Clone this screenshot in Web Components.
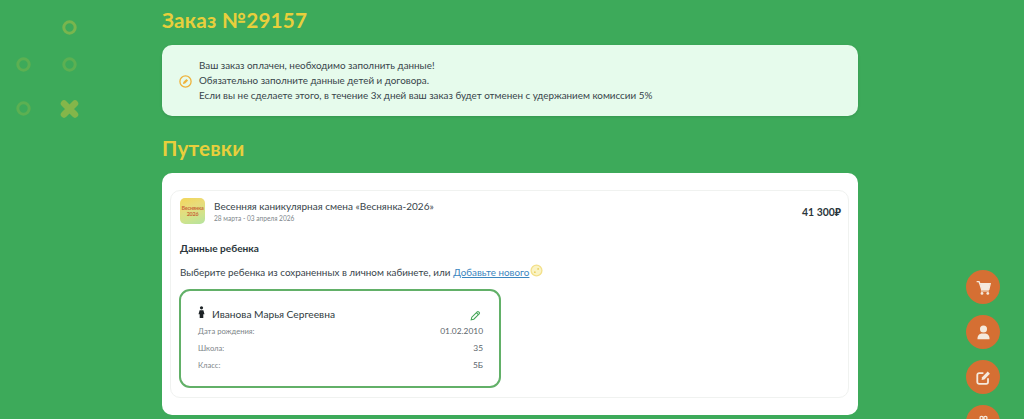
<!DOCTYPE html>
<html lang="ru">
<head>
<meta charset="utf-8">
<title>Заказ №29157</title>
<style>
    html, body { margin: 0; height: 419px; overflow: hidden; }
    body { background-color: #3daa5a; font-family: Lato, "Noto Sans", sans-serif; color: #2f3a40; }
</style>
</head>
<body>
<order-page>
    <deco-marks></deco-marks>
    <page-heading>Заказ №29157</page-heading>
    <notice-box>
        <span>Ваш заказ оплачен, необходимо заполнить данные!</span>
        <span>Обязательно заполните данные детей и договора.</span>
        <span>Если вы не сделаете этого, в течение 3х дней ваш заказ будет отменен с удержанием комиссии 5%</span>
    </notice-box>
    <page-heading class="second">Путевки</page-heading>
    <trip-card title-text="Весенняя каникулярная смена «Веснянка-2026»" dates="28 марта - 03 апреля 2026" price="41 300₽">
        <child-card name="Иванова Марья Сергеевна" birth="01.02.2010" school="35" grade="5Б"></child-card>
    </trip-card>
    <fab-stack>
        <fab-button icon="cart"></fab-button>
        <fab-button icon="user"></fab-button>
        <fab-button icon="edit"></fab-button>
        <fab-button icon="gift"></fab-button>
    </fab-stack>
</order-page>

<script>
// Contenedor de la pagina: columna central de 696px
class OrderPage extends HTMLElement {
    constructor() {
        super();
        this.attachShadow({ mode: 'open' });
        this.shadowRoot.innerHTML = `
            <style>
                :host { display: block; height: 419px; padding: 0 166px 0 162px; box-sizing: border-box; overflow: hidden; }
            </style>
            <slot></slot>
        `;
    }
}

// Marcas decorativas del fondo (circulos y una cruz)
class DecoMarks extends HTMLElement {
    constructor() {
        super();
        this.attachShadow({ mode: 'open' });
        this.shadowRoot.innerHTML = `
            <style>
                :host { position: absolute; left: 0; top: 0; display: block; }
                svg { display: block; }
            </style>
            <svg width="100" height="130" viewBox="0 0 100 130" fill="none">
                <circle cx="69.5" cy="27.5" r="5.7" stroke="#79b54e" stroke-width="3"/>
                <circle cx="23.5" cy="64.5" r="5.7" stroke="#5cb052" stroke-width="3"/>
                <circle cx="69.5" cy="64.5" r="5.7" stroke="#5cb052" stroke-width="3"/>
                <circle cx="23.5" cy="108.5" r="5.7" stroke="#5cb052" stroke-width="3"/>
                <path d="M64 103.5l11 11M75 103.5l-11 11" stroke="#84b64a" stroke-width="6.5" stroke-linecap="round"/>
            </svg>
        `;
    }
}

class PageHeading extends HTMLElement {
    constructor() {
        super();
        this.attachShadow({ mode: 'open' });
        this.shadowRoot.innerHTML = `
            <style>
                :host { display: block; height: 45px; box-sizing: border-box; padding-top: 7px; color: #e8cf3c; font-size: 20.7px; line-height: 27px; font-weight: 700; letter-spacing: 0.2px; }
                :host(.second) { height: 57px; padding-top: 19px; }
            </style>
            <slot></slot>
        `;
    }
}

class NoticeBox extends HTMLElement {
    constructor() {
        super();
        this.attachShadow({ mode: 'open' });
        this.shadowRoot.innerHTML = `
            <style>
                :host { display: flex; align-items: center; gap: 7px; height: 71px; box-sizing: border-box; padding: 0 16px 0 17px; background-color: #e6fbec; border-radius: 10px; font-size: 9.85px; line-height: 14.8px; color: #37444a; box-shadow: 0 1px 3px rgba(0, 0, 0, 0.12); }
                svg { flex: none; display: block; margin-top: 1px; }
                .lines { display: flex; flex-direction: column; }
            </style>
            <svg width="13" height="13" viewBox="0 0 13 13" fill="none">
                <circle cx="6.5" cy="6.5" r="5.6" stroke="#efb23a" stroke-width="1.3"/>
                <path d="M3.9 9.1l.5-2.2 3-3 1.7 1.7-3 3z" fill="#efb23a"/>
            </svg>
            <div class="lines"><slot></slot></div>
        `;
    }
}

// Tarjeta de la pieza de viaje con cabecera, precio y datos del nino
class TripCard extends HTMLElement {
    constructor() {
        super();
        this.attachShadow({ mode: 'open' });
    }

    connectedCallback() {
        this.render();
    }

    render() {
        const titleText = this.getAttribute('title-text');
        const dates = this.getAttribute('dates');
        const price = this.getAttribute('price');

        this.shadowRoot.innerHTML = `
            <style>
                :host { display: block; height: 242px; box-sizing: border-box; padding: 17px 9px 0 8px; background-color: #fff; border-radius: 10px; }
                .inner { height: 208px; box-sizing: border-box; padding: 7px 7px 0 9px; border: 1px solid #f0f2f0; border-radius: 10px; }
                .head { display: flex; align-items: center; height: 26px; }
                .thumb { flex: none; width: 25px; height: 26px; border-radius: 5px; margin-right: 9px; overflow: hidden; display: flex; flex-direction: column; align-items: center; justify-content: center;
                    background: linear-gradient(160deg, #f2d65a 0%, #e9dc7a 35%, #cfe38c 70%, #b4e3a0 100%); }
                .thumb b { font-size: 5.4px; line-height: 6px; font-weight: 700; color: #c9683a; letter-spacing: -0.2px; }
                .titles { flex: 1; display: flex; flex-direction: column; }
                .name { font-size: 10px; line-height: 14px; color: #37444a; }
                .dates { font-size: 6.55px; line-height: 11px; color: #7d8589; }
                .price { font-size: 10.4px; font-weight: 700; color: #2b363b; padding-top: 2px; }
                .label { margin-top: 17px; font-size: 10.1px; line-height: 14px; font-weight: 700; color: #2b363b; }
                .choose { display: flex; align-items: center; margin-top: 10px; height: 15px; font-size: 9.85px; line-height: 15px; color: #37444a; margin-bottom: 9px; }
                .choose a { color: #3a86c0; text-decoration: underline; margin-left: 3px; }
                .choose svg { margin: -4px 0 0 1px; }
                ::slotted(child-card) { margin-left: -1px; }
            </style>
            <div class="inner">
                <div class="head">
                    <div class="thumb"><b>Веснянка</b><b>2026</b></div>
                    <div class="titles">
                        <span class="name">${titleText}</span>
                        <span class="dates">${dates}</span>
                    </div>
                    <span class="price">${price}</span>
                </div>
                <div class="label">Данные ребенка</div>
                <div class="choose">
                    <span>Выберите ребенка из сохраненных в личном кабинете, или</span>
                    <a href="#">Добавьте нового</a>
                    <svg width="13" height="13" viewBox="0 0 12 12" fill="none">
                        <circle cx="6" cy="6" r="5" fill="#faf3c4" stroke="#f3e08a" stroke-width="1.2"/>
                        <circle cx="7.5" cy="4.5" r="0.8" fill="#e9cf5a"/>
                        <circle cx="4.5" cy="7.5" r="0.8" fill="#e9cf5a"/>
                    </svg>
                </div>
                <slot></slot>
            </div>
        `;
    }
}

class ChildCard extends HTMLElement {
    constructor() {
        super();
        this.attachShadow({ mode: 'open' });
    }

    connectedCallback() {
        this.render();
    }

    render() {
        const name = this.getAttribute('name');
        const birth = this.getAttribute('birth');
        const school = this.getAttribute('school');
        const grade = this.getAttribute('grade');

        this.shadowRoot.innerHTML = `
            <style>
                :host { display: block; width: 322px; height: 99px; box-sizing: border-box; padding: 13px 16px 0 17px; border: 2px solid #62b068; border-radius: 11px; background-color: #fff; }
                .who { display: flex; align-items: center; height: 19px; font-size: 10.2px; color: #2f3a40; }
                .who svg.person { margin: -3px 7px 0 0; }
                .who span { flex: 1; }
                .who svg.pen { margin: 3px 2px 0 0; }
                .row { display: flex; justify-content: space-between; height: 17px; line-height: 17px; font-size: 7.6px; color: #7d8589; }
                .row b { font-weight: 400; font-size: 8.4px; color: #5c666b; }
            </style>
            <div class="who">
                <svg class="person" width="7" height="13" viewBox="0 0 7 13"><circle cx="3.5" cy="1.8" r="1.6" fill="#1d2326"/><path d="M1.6 4.2h3.8l1.1 4H5.3V12H1.7V8.2H.5z" fill="#1d2326"/></svg>
                <span>${name}</span>
                <svg class="pen" width="11" height="11" viewBox="0 0 11 11" fill="none" stroke="#45a658" stroke-width="1.1"><path d="M1.2 9.8l.6-2.6 5.4-5.4a1 1 0 0 1 1.4 0l.6.6a1 1 0 0 1 0 1.4L3.8 9.2z"/><path d="M6.4 2.6l2 2"/></svg>
            </div>
            <div class="row"><span>Дата рождения:</span><b>${birth}</b></div>
            <div class="row"><span>Школа:</span><b>${school}</b></div>
            <div class="row"><span>Класс:</span><b>${grade}</b></div>
        `;
    }
}

// Botones flotantes de la derecha (encima del contenido)
class FabStack extends HTMLElement {
    constructor() {
        super();
        this.attachShadow({ mode: 'open' });
        this.shadowRoot.innerHTML = `
            <style>
                :host { position: fixed; left: 966px; top: 270px; display: flex; flex-direction: column; gap: 11px; }
            </style>
            <slot></slot>
        `;
    }
}

const FAB_ICONS = {
    cart: '<path d="M.6 1.6h2.3l.5 1.8h9.9l-1.3 5.4H5.2L3.3 2.6" fill="none" stroke="#f5e9dd" stroke-width="1.2"/><path d="M4 3.6h9l-1.1 5H5.2z" fill="#f5e9dd"/><path d="M4.6 10.2h7.4" stroke="#f5e9dd" stroke-width="1.1"/><circle cx="5.6" cy="12.5" r="1.3" fill="#f5e9dd"/><circle cx="11" cy="12.5" r="1.3" fill="#f5e9dd"/>',
    user: '<circle cx="7" cy="3.7" r="3.3" fill="#f5e9dd"/><path d="M1.4 13.4c-.3-3.4 2-5.4 4.2-5.4h2.8c2.2 0 4.5 2 4.2 5.4z" fill="#f5e9dd"/>',
    edit: '<path d="M11.2 7.8v3.4a1.7 1.7 0 0 1-1.7 1.7H2.9a1.7 1.7 0 0 1-1.7-1.7V4.6a1.7 1.7 0 0 1 1.7-1.7h4" fill="none" stroke="#f5e9dd" stroke-width="1.7"/><path d="M5.2 9.4l.5-2.6 5.2-5.3 2.1 2.1-5.2 5.3z" fill="#f5e9dd"/>',
    gift: '<path d="M1.5 4.6h11v3h-11zM2.5 8.5h9V13h-9z" fill="#f5e9dd"/><circle cx="5.2" cy="2.8" r="1.5" fill="none" stroke="#f5e9dd" stroke-width="1.2"/><circle cx="8.8" cy="2.8" r="1.5" fill="none" stroke="#f5e9dd" stroke-width="1.2"/>'
};

class FabButton extends HTMLElement {
    constructor() {
        super();
        this.attachShadow({ mode: 'open' });
    }

    connectedCallback() {
        const icon = FAB_ICONS[this.getAttribute('icon')];
        this.shadowRoot.innerHTML = `
            <style>
                :host { display: flex; align-items: center; justify-content: center; width: 34px; height: 34px; border-radius: 50%; background-color: #d56f33; }
                svg { display: block; }
            </style>
            <svg width="15" height="15" viewBox="0 0 14 14">${icon}</svg>
        `;
    }
}

// Registro los componentes
customElements.define('order-page', OrderPage);
customElements.define('deco-marks', DecoMarks);
customElements.define('page-heading', PageHeading);
customElements.define('notice-box', NoticeBox);
customElements.define('trip-card', TripCard);
customElements.define('child-card', ChildCard);
customElements.define('fab-stack', FabStack);
customElements.define('fab-button', FabButton);
</script>
</body>
</html>
